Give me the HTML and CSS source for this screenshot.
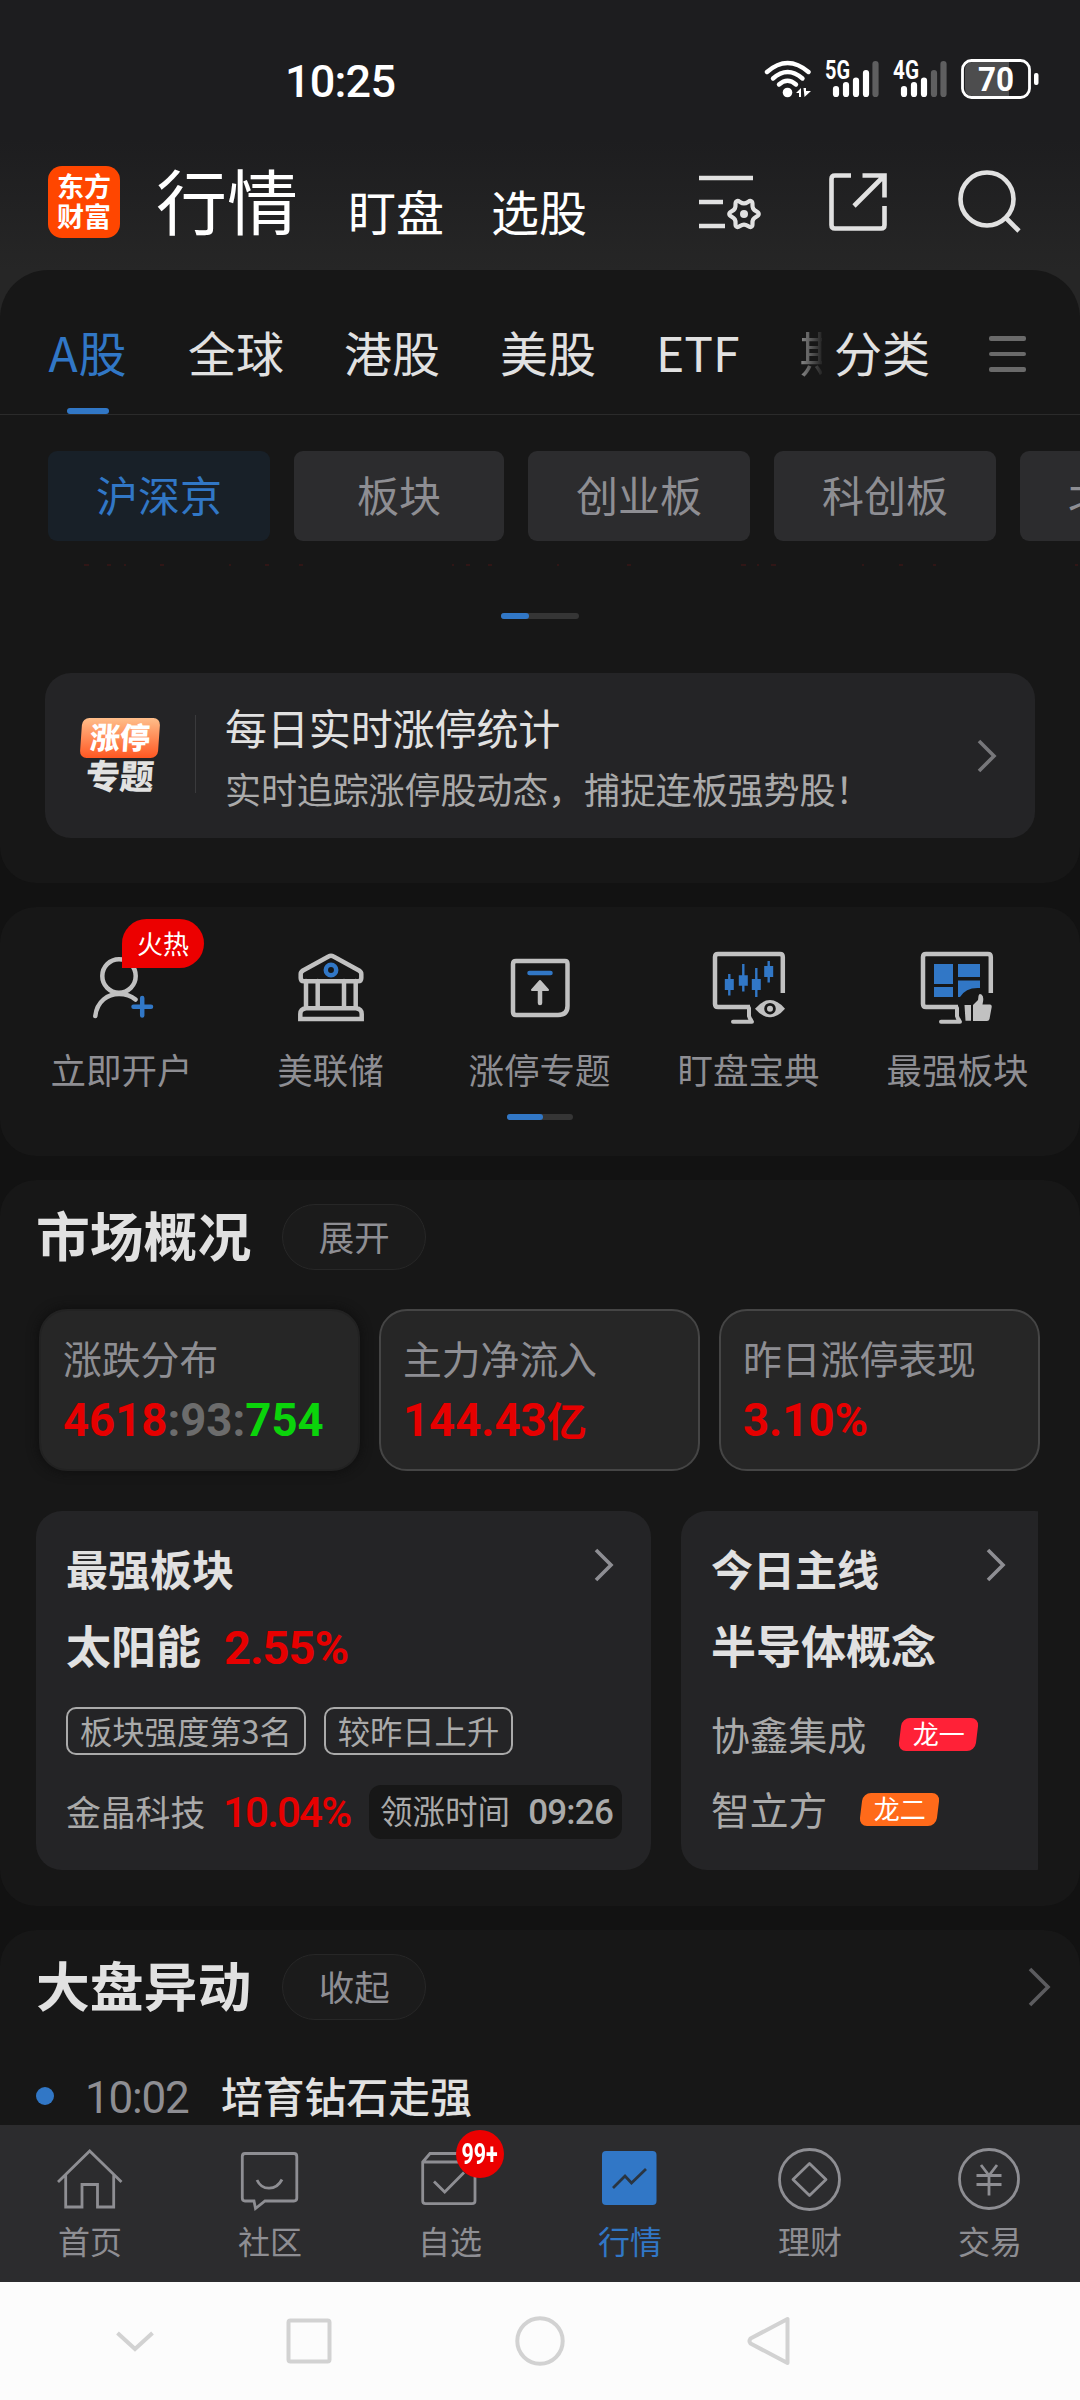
FILE: index.html
```html
<!DOCTYPE html>
<html lang="zh-CN">
<head>
<meta charset="utf-8">
<title>行情</title>
<link rel="stylesheet" href="styles.css">
</head>
<body>
<div class="screen">
  <header class="header">
    <div class="status">
      <span class="clock">10:25</span>
      <svg class="status-icons" width="285" height="50" viewBox="760 55 285 50">
        <g fill="none" stroke="#fff" stroke-width="4.4" stroke-linecap="round">
          <path d="M767 72Q787.500 54 808.500 72"/><path d="M773 78.500Q787.500 65.500 802.500 78.500"/><path d="M779 84.500Q787.500 77 796 84.500"/>
        </g>
        <circle cx="787.500" cy="92.500" r="4.800" fill="#fff"/>
        <path d="M796 93L801 88V97H799V93ZM803.500 88L806 88V91L811 91L804.500 97Z" fill="#fff"/>
        <text class="net" x="825" y="78.500" textLength="25" lengthAdjust="spacingAndGlyphs">5G</text>
        <text class="net" x="893" y="78.500" textLength="26" lengthAdjust="spacingAndGlyphs">4G</text>
        <g stroke="#fff" stroke-width="6.200" stroke-linecap="round">
          <path d="M836 89V94M846 85V94M856 80.500V94M866 73V94M904 89V94M914 85V94M924 80.500V94"/>
          <path stroke="#5f5f60" d="M875.500 64V94M934 73V94M943.500 64V94"/>
        </g>
        <path d="M973 62H1009V96H973Q965 96 965 88V70Q965 62 973 62Z" fill="#4d4d4e"/>
        <rect x="962.500" y="60.500" width="67" height="37" rx="9" fill="none" stroke="#fff" stroke-width="2.800"/>
        <rect x="1034" y="73" width="4.500" height="12" rx="2" fill="#fff"/>
        <text class="level" x="978" y="91" textLength="36" lengthAdjust="spacingAndGlyphs">70</text>
      </svg>
    </div>
    <div class="topbar">
      <div class="logo"><span>东方</span><span>财富</span></div>
      <h1>行情</h1>
      <a class="top-link">盯盘</a>
      <a class="top-link second">选股</a>
      <svg class="top-icon gear" width="70" height="70" viewBox="696 167 70 70">
        <path d="M699 178H753M699 202H723M699 226H725"/>
        <path transform="translate(744 214) scale(.92) translate(-744 -214)" d="M744 202.500C748 202.500 749.400 198.600 752 200.100C754.600 201.600 752 204.700 754 208.200C756 211.700 760 211 760 214C760 217 756 216.300 754 219.800C752 223.300 754.600 226.400 752 227.900C749.400 229.400 748 225.500 744 225.500C740 225.500 738.600 229.400 736 227.900C733.400 226.400 736 223.300 734 219.800C732 216.300 728 217 728 214C728 211 732 211.700 734 208.200C736 204.700 733.400 201.600 736 200.100C738.600 198.600 740 202.500 744 202.500Z"/>
        <circle class="dot" cx="744" cy="214" r="4"/>
      </svg>
      <svg class="top-icon" width="70" height="70" viewBox="823 167 70 70">
        <path d="M851 175.500H835Q831.500 175.500 831.500 179V225Q831.500 228.500 835 228.500H881Q884.500 228.500 884.500 225V206M862.500 175.500H884.500V197.500M884 176L854 206"/>
      </svg>
      <svg class="top-icon" width="70" height="70" viewBox="955 167 70 70">
        <circle cx="987" cy="199" r="26.500"/><path d="M1005.500 217.500L1019 231"/>
      </svg>
    </div>
  </header>

  <main class="content">
    <section class="card market">
      <nav class="tabs">
        <div class="tab-list">
          <a class="tab on">A股</a><a class="tab">全球</a><a class="tab">港股</a><a class="tab">美股</a><a class="tab">ETF</a><a class="tab faded">期</a>
        </div>
        <a class="tab">分类</a>
        <div class="menu"><i></i><i></i><i></i></div>
      </nav>
      <div class="chips">
        <a class="chip on">沪深京</a><a class="chip short">板块</a><a class="chip">创业板</a><a class="chip">科创板</a><a class="chip">北证</a>
      </div>
      <svg class="specks" width="1080" height="2" viewBox="0 0 1080 2">
        <path d="M84 1h5M107 1h4M124 1h2M160 1h4M229 1h2M265 1h4M299 1h4M452 1h2M466 1h4M488 1h4M557 1h2M627 1h4M741 1h5M757 1h2M771 1h5M862 1h2M899 1h4M933 1h3M1075 1h3" stroke="#4a1616"/>
      </svg>
      <div class="pager wide"><i></i></div>
      <a class="banner">
        <div class="topic">
          <span class="topic-top">涨停</span>
          <span class="topic-bottom">专题</span>
        </div>
        <div class="banner-text">
          <div class="banner-title">每日实时涨停统计</div>
          <div class="banner-sub">实时追踪涨停股动态，捕捉连板强势股！</div>
        </div>
        <svg class="chev" width="22" height="36" viewBox="0 0 22 36"><path d="M3 3L18 18L3 33"/></svg>
      </a>
    </section>

    <section class="card shortcuts">
      <div class="grid">
        <a class="shortcut">
          <svg width="84" height="84" viewBox="79 944 84 84">
            <circle cx="118" cy="976" r="16.700"/><path d="M94.300 1016C96 1001 107 994 118 994Q128 994 134.500 999.500"/>
            <path class="blue" d="M132.500 1006.700H150M141.200 998V1015.500"/>
          </svg>
          <span>立即开户</span><b class="hot">火热</b>
        </a>
        <a class="shortcut">
          <svg width="84" height="84" viewBox="289 944 84 84">
            <path stroke-linejoin="round" d="M328.500 956.500Q331 955 333.500 956.500L359 970.500Q361.300 972 361.300 974V978Q361.300 981.300 358 981.300H304Q300.700 981.300 300.700 978V974Q300.700 972 303 970.500Z"/>
            <path d="M306 981V1008M317.700 981V1008M344 981V1008M355.700 981V1008M306 1008.300H356Q361.700 1009 361.700 1014V1019H300.300V1014Q300.300 1009 306 1008.300Z"/>
            <circle class="blue" cx="331" cy="970" r="5.200"/>
          </svg>
          <span>美联储</span>
        </a>
        <a class="shortcut">
          <svg width="84" height="84" viewBox="498 944 84 84">
            <path d="M516 961H565Q567.500 961 567.500 964V1006Q567.500 1015 558 1015H516Q513 1015 513 1012V964Q513 961 516 961ZM540 985V1003"/>
            <path class="fill" stroke-linejoin="round" stroke-width="2" d="M540 981L548 990H532Z"/>
            <path class="blue" d="M529.500 973H550.500"/>
          </svg>
          <span>涨停专题</span>
        </a>
        <a class="shortcut">
          <svg width="84" height="84" viewBox="707 944 84 84">
            <path stroke-linecap="butt" d="M782.800 993V957Q782.800 954 780 954H718Q715 954 715 957V1004Q715 1007 718 1007H750"/>
            <path stroke-width="4" d="M733 1021.700H752M749 1008V1016Q749.500 1018 751 1020"/>
            <path class="fill" stroke="none" d="M755 1008.700Q770 991.500 785 1008.700Q770 1026 755 1008.700Z"/>
            <circle class="pupil" cx="770" cy="1008.700" r="4.400"/>
            <path class="blue thin" d="M729.300 974V995.500M743.300 964V991.500M756.300 968V997M768.700 961V982.500"/>
            <path class="blue candle" d="M729.300 979V990M743.300 975.300V985.700M756.300 979V990M768.700 966V977"/>
          </svg>
          <span>盯盘宝典</span>
        </a>
        <a class="shortcut">
          <svg width="84" height="84" viewBox="916 944 84 84">
            <path stroke-linecap="butt" d="M990.800 993V957Q990.800 954 988 954H926Q923 954 923 957V1004Q923 1007 926 1007H958"/>
            <path stroke-width="4" d="M941 1021.700H960M957 1008V1016Q957.500 1018 959 1020"/>
            <path class="blue-fill" d="M934 964H953V984H934ZM958 964H980V977H958ZM934 987H953V997H934ZM958 980.500H980V988Q966 987 960 997H958Z"/>
            <path class="fill" stroke="none" d="M964.500 1005H971V1020.700H965.500ZM973 1005L978 1000L978.500 996Q979 993 981.500 994.500Q984.500 996.500 982.500 1004.500H990Q992 1004.500 991.700 1007L989.500 1019Q989 1021 987 1021H973Z"/>
          </svg>
          <span>最强板块</span>
        </a>
      </div>
      <div class="pager"><i></i></div>
    </section>

    <section class="card overview">
      <div class="section-head"><h2>市场概况</h2><a class="pill">展开</a></div>
      <div class="stats">
        <div class="stat plain"><div class="stat-name">涨跌分布</div><div class="stat-value"><span class="up">4618</span><span class="flat">:93:</span><span class="down">754</span></div></div>
        <div class="stat"><div class="stat-name">主力净流入</div><div class="stat-value up">144.43<small>亿</small></div></div>
        <div class="stat"><div class="stat-name">昨日涨停表现</div><div class="stat-value up">3.10%</div></div>
      </div>
      <div class="panels">
        <article class="panel sector">
          <div class="panel-head"><h3>最强板块</h3><svg class="chev" width="22" height="36" viewBox="0 0 22 36"><path d="M3 3L18 18L3 33"/></svg></div>
          <div class="lead">太阳能<span class="lead-rate">2.55%</span></div>
          <div class="tags"><span class="tag">板块强度第3名</span><span class="tag">较昨日上升</span></div>
          <div class="leader"><span class="leader-name">金晶科技</span><span class="leader-rate">10.04%</span><span class="when">领涨时间<b>09:26</b></span></div>
        </article>
        <article class="panel theme">
          <div class="panel-head"><h3>今日主线</h3><svg class="chev" width="22" height="36" viewBox="0 0 22 36"><path d="M3 3L18 18L3 33"/></svg></div>
          <div class="lead">半导体概念</div>
          <div class="stock">协鑫集成<span class="rank first"><em>龙一</em></span></div>
          <div class="stock">智立方<span class="rank"><em>龙二</em></span></div>
        </article>
      </div>
    </section>

    <section class="card moves">
      <div class="section-head"><h2>大盘异动</h2><a class="pill">收起</a><svg class="chev far" width="28" height="42" viewBox="0 0 28 42"><path d="M4 3L22 21L4 39"/></svg></div>
      <div class="move"><i></i><time>10:02</time><span>培育钻石走强</span></div>
    </section>
  </main>

  <nav class="bottom-nav">
    <a class="nav-item">
      <svg width="72" height="66" viewBox="54 2146 72 66"><path d="M58 2182L89.700 2151L121.500 2182M65.700 2175V2207H82V2184.500H97.500V2207H113.700V2175"/></svg><span>首页</span>
    </a>
    <a class="nav-item">
      <svg width="72" height="66" viewBox="234 2146 72 66"><path d="M245 2153.500H294Q296.800 2153.500 296.800 2156.500V2198Q296.800 2201 294 2201H265L255.500 2208.500L254 2201H245Q242.300 2201 242.300 2198V2156.500Q242.300 2153.500 245 2153.500ZM257 2180C262 2191 276 2191 282 2179.500"/></svg><span>社区</span>
    </a>
    <a class="nav-item">
      <svg width="72" height="66" viewBox="414 2146 72 66"><path d="M422.700 2162L430 2153.500H468L475 2162V2201Q475 2203.700 472 2203.700H425.500Q422.700 2203.700 422.700 2201ZM422.700 2162H475M434 2181.500L444.700 2192L464 2172.500"/></svg><span>自选</span><b class="count"><em>99+</em></b>
    </a>
    <a class="nav-item on">
      <svg width="72" height="66" viewBox="594 2146 72 66"><rect x="602" y="2151" width="54.500" height="54" rx="4" fill="#3177c6" stroke="none"/><path class="trend" d="M613 2188L625 2176L631.500 2183L646 2169"/></svg><span>行情</span>
    </a>
    <a class="nav-item">
      <svg width="72" height="66" viewBox="774 2146 72 66"><circle cx="809.500" cy="2179.500" r="30"/><path stroke-linejoin="round" d="M809.500 2163.500L826 2179.500L809.500 2195.500L793 2179.500Z"/></svg><span>理财</span>
    </a>
    <a class="nav-item">
      <svg width="72" height="66" viewBox="954 2146 72 66"><circle cx="989" cy="2179" r="29.500"/><path d="M981 2165L989 2175.500L997 2165M989 2175.500V2195.500M976.500 2175.500H1001.500M976.500 2184.500H1001.500"/></svg><span>交易</span>
    </a>
  </nav>

  <footer class="sysnav">
    <svg width="720" height="60" viewBox="100 2311 720 60">
      <path d="M117.500 2333L135 2349L152.500 2333"/><rect x="288.500" y="2320.500" width="41" height="41" rx="2"/>
      <circle cx="540" cy="2341" r="22.700"/><path stroke-linejoin="round" d="M787.500 2319V2363L750.500 2343.500Q748.500 2341 750.500 2338.500Z"/>
    </svg>
  </footer>
</div>
</body>
</html>
```
FILE: styles.css
```css
* { box-sizing: border-box; }
body {
  margin: 0;
  background: #121212;
  color: #e1e1e1;
  font-family: "Noto Sans CJK SC", sans-serif;
}
h1, h2, h3 { margin: 0; font-weight: 500; }
b, em, i, small { font-style: normal; font-size: inherit; }
svg { display: block; flex: none; }

.screen {
  width: 1080px;
  height: 2400px;
  display: flex;
  flex-direction: column;
  overflow: hidden;
  white-space: nowrap;
}

/* header */
.header {
  flex: none;
  height: 330px;
  margin-bottom: -60px;
  background: linear-gradient(#1d1d1f 0, #1d1d1f 140px, #262626 270px);
}
.status {
  height: 120px;
  padding: 56px 35px 0 285px;
  display: flex;
  justify-content: space-between;
}
.status-icons { margin-top: -1px; }
.clock {
  font: 500 45px/52px Roboto, sans-serif;
  letter-spacing: -0.8px;
  color: #fff;
}
.net { font: 700 25px Roboto, sans-serif; fill: #fff; }
.level { font: 700 34px Roboto, sans-serif; fill: #fff; }
.topbar {
  display: flex;
  align-items: flex-start;
  padding: 42px 55px 0 48px;
  color: #fff;
}
.logo {
  width: 72px;
  height: 72px;
  margin-top: 4px;
  padding-top: 5px;
  border-radius: 14px;
  background: #ff4600;
  display: flex;
  flex-direction: column;
  align-items: center;
  font-size: 27px;
  line-height: 30px;
  font-weight: 700;
}
.topbar h1 {
  margin-left: 36px;
  font-size: 71px;
  line-height: 73px;
  font-weight: 400;
}
.top-link {
  margin: 18px 0 0 50px;
  font-size: 48px;
  line-height: 60px;
}
.top-link.second { margin-left: 47px; }
.top-icon { margin: 5px 0 0 62px; fill: none; stroke: #e1e1e1; stroke-width: 4.6; }
.top-icon.gear { margin: 5px -5px 0 auto; }
.top-icon .dot { fill: #e1e1e1; stroke: none; }

/* cards */
.content {
  flex: 1;
  min-height: 0;
  overflow: hidden;
  display: flex;
  flex-direction: column;
  gap: 24px;
}
.card { flex: none; border-radius: 36px; background: #171717; overflow: hidden; }
.market { height: 613px; border-radius: 48px 48px 36px 36px; box-shadow: 0 100px 0 #121212; }
.shortcuts, .overview, .moves { position: relative; }

.tabs {
  height: 145px;
  padding: 0 54px 0 48px;
  border-bottom: 1.500px solid #2b2b2b;
  display: flex;
}
.tab-list { width: 774px; margin-right: 12px; display: flex; gap: 60px; overflow: hidden; }
.tab {
  flex: none;
  height: 144px;
  font-size: 48px;
  line-height: 162px;
}
.tab.on {
  width: 80px;
  color: #3177c6;
  letter-spacing: 1px;
  display: flex;
  flex-direction: column;
  align-items: center;
}
.tab.on::after { content: ""; width: 42px; height: 6px; margin-top: -24px; border-radius: 3px; background: #3177c6; }
.tab.faded {
  width: 22px;
  background: linear-gradient(90deg, #8a8a8a, #252525);
  background-clip: text;
  color: transparent;
}
.menu { margin: 66px 0 0 auto; display: flex; flex-direction: column; gap: 11px; }
.menu i { width: 37px; height: 4.500px; border-radius: 2px; background: #6a6a6a; }

.chips { display: flex; gap: 24px; padding: 36px 0 0 48px; }
.chip {
  flex: none;
  height: 90px;
  padding: 0 48px;
  border-radius: 9px;
  background: #2c2c2e;
  color: #8e8e93;
  font-size: 42px;
  line-height: 86px;
}
.chip.short { padding: 0 63px; }
.chip.on { background: #182028; color: #3177c6; }
.specks { margin-top: 23px; }
.pager { width: 66px; height: 6px; margin: 0 auto; border-radius: 3px; background: #353535; }
.pager i { display: block; width: 36px; height: 6px; border-radius: 3px; background: #3177c6; }
.pager.wide { width: 78px; margin-top: 47px; }
.pager.wide i { width: 28px; }

.banner {
  height: 165px;
  margin: 54px 45px 0;
  padding: 0 37px 0 36px;
  border-radius: 26px;
  background: #242426;
  display: flex;
  align-items: center;
}
.topic {
  width: 115px;
  height: 78px;
  margin-top: -3px;
  padding-top: 3px;
  border-right: 1.500px solid #3a3a3c;
  font-weight: 900;
}
.topic-top, .topic-bottom { display: block; width: 78px; text-align: center; transform: skewX(-4deg); }
.topic-top {
  height: 40px;
  border-radius: 7px;
  background: linear-gradient(#ffbe8a, #ff5722);
  color: #fff;
  font-size: 30px;
  line-height: 36px;
}
.topic-bottom { margin-top: 1px; font-size: 34px; line-height: 32px; }
.banner-text { margin-left: 29px; padding-top: 4px; }
.banner-title { font-size: 42px; line-height: 60px; letter-spacing: -0.1px; }
.banner-sub { font-size: 36px; line-height: 62px; letter-spacing: -0.1px; color: #aaa; }
.chev { margin-left: auto; fill: none; stroke: #77777a; stroke-width: 3.6; }

/* shortcuts */
.shortcuts { height: 249px; }
.grid { display: grid; grid-template-columns: repeat(5, 209px); padding: 37px 0 0 17px; }
.shortcut { position: relative; display: flex; flex-direction: column; align-items: center; }
.shortcut svg { fill: none; stroke: #c1c1c1; stroke-width: 4.500; stroke-linecap: round; }
.shortcut .fill { fill: #c1c1c1; }
.shortcut .blue { stroke: #3177c6; }
.shortcut .blue-fill { fill: #3177c6; stroke: none; }
.shortcut .thin { stroke-width: 2.4; stroke-linecap: butt; }
.shortcut .candle { stroke-width: 9; stroke-linecap: butt; }
.shortcut .pupil { stroke: #171717; stroke-width: 2.8; }
.shortcut span { margin-top: 14px; font-size: 35.500px; line-height: 54px; color: #8e8e93; }
.hot {
  position: absolute;
  left: 105px;
  top: -25px;
  width: 82px;
  height: 49px;
  border-radius: 25px 25px 25px 0;
  background: #ec0000;
  color: #fff;
  font-size: 26px;
  line-height: 47px;
  font-weight: 400;
  text-align: center;
}
.shortcuts .pager { margin-top: 18px; }

/* market overview */
.overview { height: 726px; padding-top: 24px; }
.section-head { height: 66px; padding: 0 26px 0 36px; display: flex; align-items: center; }
.section-head h2 { font-size: 53.800px; line-height: 60px; margin-top: -6px; font-weight: 700; }
.pill {
  width: 144px;
  height: 66px;
  margin-left: 31px;
  border: 1.500px solid #272727;
  border-radius: 33px;
  background: #1b1b1b;
  color: #8e8e93;
  font-size: 35.500px;
  line-height: 61px;
  text-align: center;
}
.stats { display: grid; grid-template-columns: repeat(3, 321px); gap: 19px; margin: 39px 40px 0 39px; }
.stat {
  height: 162px;
  padding: 19px 0 0 22px;
  border: 2px solid #454545;
  border-radius: 28px;
  background: #262626;
}
.stat.plain { border-color: #222; box-shadow: 0 0 12px #0d0d0d; }
.stat-name { font-size: 38.800px; line-height: 54px; color: #8e8e93; }
.stat-value { height: 60px; font: 700 45.500px/73px Roboto, sans-serif; }
.stat-value small { font: 700 40px/40px "Noto Sans CJK SC", sans-serif; }
.up { color: #e60000; }
.flat { color: #6c6c6c; }
.down { color: #0bd40b; }

.panels { display: flex; gap: 30px; margin: 40px 42px 0 36px; overflow: hidden; }
.panel { flex: none; height: 359px; border-radius: 26px; background: #242426; padding: 24px 0 0 30px; }
.sector { width: 615px; }
.theme { width: 380px; padding-right: 18px; }
.panel-head { height: 66px; padding-right: 36px; display: flex; align-items: center; }
.panel-head h3 { font-size: 42px; line-height: 60px; font-weight: 700; }
.panel-head .chev { margin-top: -6px; stroke: #8e8e93; }
.panel .lead { height: 80px; font-size: 45px; line-height: 88px; font-weight: 700; }
.theme .lead { height: 91px; }
.lead-rate { margin-left: 23px; font: 700 47px/70px Roboto, sans-serif; letter-spacing: -1px; color: #e60000; }
.tags { display: flex; gap: 18px; margin-top: 26px; }
.tag {
  height: 48px;
  padding: 0 12px;
  border: 2px solid #aaa;
  border-radius: 10px;
  color: #aaa;
  font-size: 32.300px;
  line-height: 42px;
}
.leader { display: flex; align-items: center; height: 54px; margin-top: 30px; color: #aaa; }
.leader-name { width: 157px; margin-top: -2px; font-size: 34.800px; line-height: 48px; }
.leader-rate { width: 146px; padding-top: 1px; font: 500 42px/54px Roboto, sans-serif; letter-spacing: -1.8px; color: #e60000; }
.when {
  width: 253px;
  height: 54px;
  padding: 0 9px 0 11px;
  border-radius: 12px;
  background: #171717;
  font-size: 32.500px;
  line-height: 49px;
  display: flex;
  justify-content: space-between;
}
.when b { font: 500 35px/56px Roboto, sans-serif; letter-spacing: -0.8px; }
.stock { height: 75px; padding-top: 6px; display: flex; align-items: center; font-size: 38.800px; color: #aaa; line-height: 66px; }
.rank {
  width: 77px;
  height: 33px;
  margin: 4px 0 0 34px;
  border-radius: 8px;
  background: #ff6a1a;
  transform: skewX(-7deg);
  color: #fff;
  font-size: 26px;
  font-weight: 400;
  line-height: 30px;
  text-align: center;
}
.rank.first { background: #ff2137; }
.rank em { display: block; transform: skewX(7deg); }

/* market moves */
.moves { height: 260px; padding-top: 24px; }
.section-head .far { stroke: #5c5c5f; }
.move { display: flex; align-items: center; height: 60px; margin-top: 46px; padding-left: 36px; font-size: 41.800px; font-weight: 500; line-height: 54px; }
.move i { width: 18px; height: 18px; border-radius: 50%; background: #3177c6; }
.move time { width: 136px; margin: 3px 0 0 31px; font: 400 44px/54px Roboto, sans-serif; letter-spacing: -1.2px; color: #8e8e93; }
.move span { margin-top: -2px; }

/* bottom navigation */
.bottom-nav {
  flex: none;
  height: 157px;
  background: #2c2c2e;
  display: grid;
  grid-template-columns: repeat(6, 1fr);
  padding-top: 21px;
}
.nav-item { position: relative; display: flex; flex-direction: column; align-items: center; color: #8e8e93; font-size: 32px; line-height: 48px; }
.nav-item svg { fill: none; stroke: #8e8e93; stroke-width: 2.8; }
.nav-item .trend { stroke: #2a3541; }
.nav-item span { margin-top: 4px; }
.nav-item.on { color: #3177c6; }
.count {
  position: absolute;
  left: 96px;
  top: -16px;
  width: 48px;
  height: 48px;
  border-radius: 50%;
  background: #ec0000;
  color: #fff;
  font: 700 29px/49px Roboto, sans-serif;
  display: flex;
  justify-content: center;
}
.count em { transform: scaleX(.74); }

.sysnav { flex: none; height: 118px; padding: 29px 0 0 100px; background: #fcfcfc; }
.sysnav svg { fill: none; stroke: #d2d2d2; stroke-width: 4; }
```
